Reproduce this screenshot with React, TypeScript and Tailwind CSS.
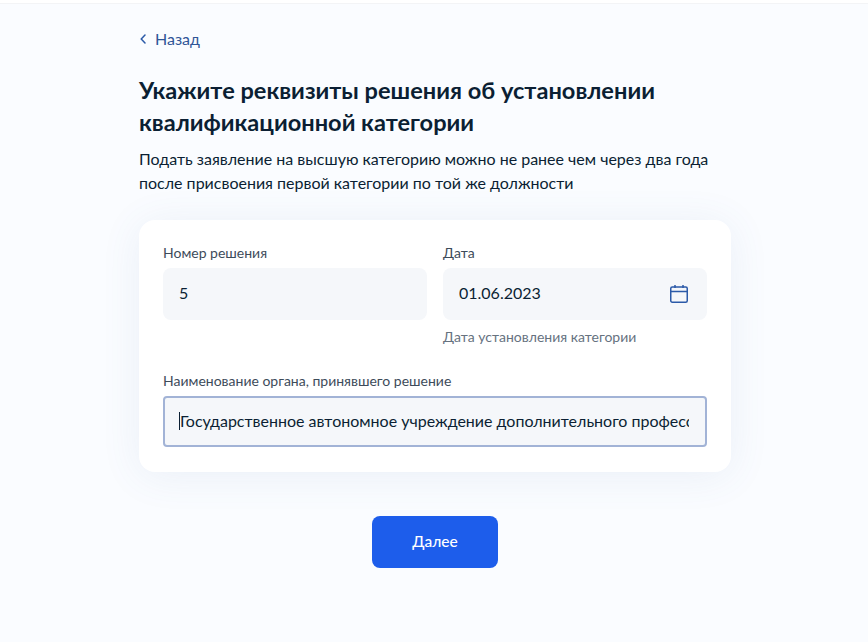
import React from "react";

const FONT = "font-['Lato','Noto_Sans',sans-serif]";

export default function App() {
  return (
    <div className={`${FONT} h-[642px] overflow-hidden bg-[#fafcff] text-[#0b1f33]`}>
      {/* top bar edge */}
      <div className="h-1 bg-white border-b border-[#f3f4f6]" />

      <div className="w-[592px] ml-[139px]">
        {/* Back link */}
        <div className="flex items-center gap-[9px] mt-[25px] h-5 text-[#2f5597] text-base leading-5">
          <svg width="6" height="10" viewBox="0 0 6 10" fill="none" className="ml-px">
            <path d="M5 1 1.2 5 5 9" stroke="#2b5aa8" strokeWidth="1.5" strokeLinecap="round" strokeLinejoin="round" />
          </svg>
          <span>Назад</span>
        </div>

        <h1 className="mt-[25px] text-[23.6px] leading-8 font-bold">
          Укажите реквизиты решения об установлении
          <br />
          квалификационной категории
        </h1>
        <p className="mt-[9px] text-base leading-6">
          Подать заявление на высшую категорию можно не ранее чем через два года
          <br />
          после присвоения первой категории по той же должности
        </p>

        {/* Form card */}
        <div className="mt-[25px] h-[252px] rounded-2xl bg-white px-6 pt-6 shadow-[0_4px_40px_rgba(80,110,170,0.09)]">
          <div className="grid grid-cols-2 gap-4">
            <div>
              <div className="text-sm leading-[18px] text-[#3d4b5a]">Номер решения</div>
              <input
                readOnly
                value="5"
                className="mt-[6px] w-full h-[52px] rounded-lg bg-[#f5f7fa] px-4 pb-1 text-base outline-none"
              />
            </div>
            <div>
              <div className="text-sm leading-[18px] text-[#3d4b5a]">Дата</div>
              <div className="mt-[6px] h-[52px] rounded-lg bg-[#f5f7fa] pl-4 pr-[18px] flex items-center justify-between">
                <input readOnly value="01.06.2023" className="w-40 pb-0.5 bg-transparent text-base outline-none" />
                <svg width="20" height="20" viewBox="0 0 20 20" fill="none">
                  <rect x="1.75" y="3" width="16.5" height="15.25" rx="1.5" stroke="#2b5aa8" strokeWidth="1.5" />
                  <path d="M2 7.5h16M6 1v3M14 1v3" stroke="#2b5aa8" strokeWidth="1.5" />
                </svg>
              </div>
              <div className="mt-2 text-sm leading-[18px] text-[#66727f]">Дата установления категории</div>
            </div>
          </div>

          <div className="mt-[26px] text-sm leading-[18px] text-[#3d4b5a]">
            Наименование органа, принявшего решение
          </div>
          <div className="relative mt-[6px]">
            <input
              readOnly
              value="Государственное автономное учреждение дополнительного профессионального образования"
              className="w-full h-[51px] rounded border-2 border-[#a2b3d6] bg-[#f5f7fa] pl-[15px] pr-4 pb-0.5 text-base outline-none"
            />
            {/* text caret */}
            <span className="absolute left-[16px] top-[16px] h-[18px] w-px bg-[#0b1f33]" />
          </div>
        </div>

        {/* Next */}
        <div className="mt-11 flex justify-center">
          <button className="w-[126px] h-[52px] rounded-lg bg-[#1d5deb] pb-px text-white text-[15.5px] font-medium">
            Далее
          </button>
        </div>
      </div>
    </div>
  );
}
